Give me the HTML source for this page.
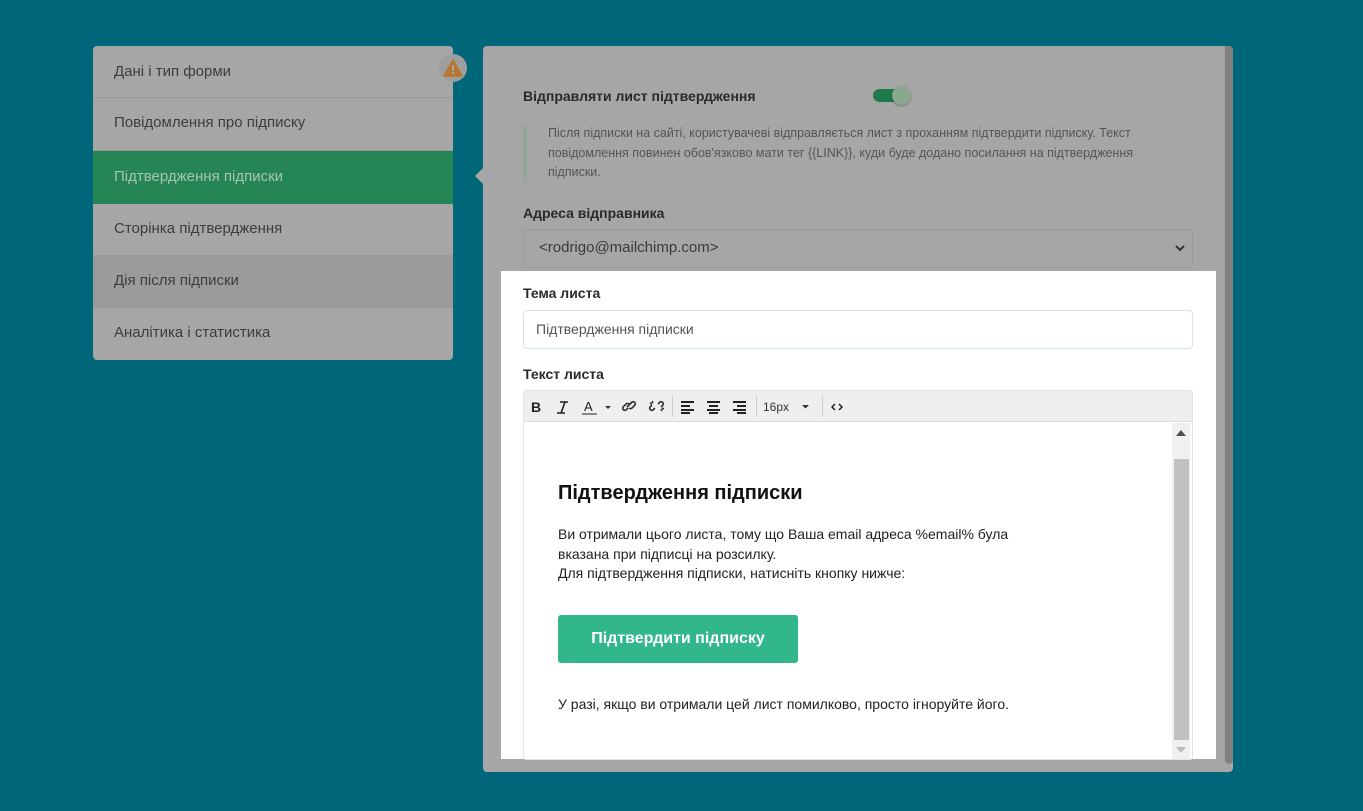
<!DOCTYPE html>
<html><head><meta charset="utf-8"><style>
*{box-sizing:border-box;margin:0;padding:0}
body{width:1363px;height:811px;background:#00677a;font-family:"Liberation Sans",sans-serif;position:relative;overflow:hidden}
.abs{position:absolute}
.menu{left:93px;top:46px;width:360px;height:314px;background:#a6a6a6;border-radius:4px;overflow:hidden}
.mi{height:52.3px;line-height:50px;padding-left:21px;font-size:15px;color:#3d3d3d;border-bottom:1px solid #9a9a9a}
.panel{left:483px;top:46px;width:750px;height:726px;background:#a6a6a6;border-radius:4px}
.t{font-size:14px;color:#2a2a2a;font-weight:bold}
</style></head><body>
<div class="abs menu">
<div class="mi" style="line-height:51px">Дані і тип форми</div>
<div class="mi">Повідомлення про підписку</div>
<div class="mi" style="background:#258555;color:#a8c5b2;border:none;height:53px;line-height:52px">Підтвердження підписки</div>
<div class="mi">Сторінка підтвердження</div>
<div class="mi" style="background:#9b9b9b">Дія після підписки</div>
<div class="mi" style="border:none">Аналітика і статистика</div>
</div>
<div class="abs" style="left:439px;top:54px;width:28px;height:28px;border-radius:50%;background:#9e9e9e"></div>
<svg class="abs" style="left:443px;top:58px" width="20" height="20" viewBox="0 0 20 20"><path d="M10 2L19 18H1Z" fill="#b7772e" stroke="#b7772e" stroke-linejoin="round" stroke-width="1.5"/><rect x="9" y="7" width="2" height="6" fill="#a6a6a6"/><rect x="9" y="14" width="2" height="2" fill="#a6a6a6"/></svg>
<div class="abs" style="left:475px;top:167px;width:0;height:0;border-top:9px solid transparent;border-bottom:9px solid transparent;border-right:9px solid #a6a6a6"></div>
<div class="abs panel"></div>
<div class="abs" style="left:1225px;top:46px;width:8px;height:718px;background:#808080;border-radius:0 4px 4px 4px"></div>
<div class="abs t" style="left:523px;top:88px">Відправляти лист підтвердження</div>
<div class="abs" style="left:873px;top:89px;width:30px;height:13px;border-radius:7px;background:#1e7a4d"></div>
<div class="abs" style="left:892px;top:86px;width:19px;height:19px;border-radius:50%;background:#8aa88f;box-shadow:0 1px 2px rgba(0,0,0,.3)"></div>
<div class="abs" style="left:523px;top:126px;width:4px;height:57px;background:#8fa89a"></div>
<div class="abs" style="left:548px;top:124px;width:612px;font-size:12.5px;line-height:19.5px;color:#555">Після підписки на сайті, користувачеві відправляється лист з проханням підтвердити підписку. Текст повідомлення повинен обов'язково мати тег {{LINK}}, куди буде додано посилання на підтвердження підписки.</div>
<div class="abs t" style="left:523px;top:205px">Адреса відправника</div>
<div class="abs" style="left:523px;top:229px;width:670px;height:39px;border:1px solid #8f9f9c;border-radius:4px;font-size:15px;color:#3a3a3a;padding:9px 15px">&lt;rodrigo@mailchimp.com&gt;</div>
<svg class="abs" style="left:1174px;top:243px" width="12" height="10"><path d="M2 3L6 7L10 3" stroke="#333" stroke-width="2" fill="none"/></svg>
<div class="abs" style="left:501px;top:271px;width:715px;height:488px;background:#fff"></div>
<div class="abs t" style="left:523px;top:285px">Тема листа</div>
<div class="abs" style="left:523px;top:310px;width:670px;height:39px;border:1px solid #d5e4e2;border-radius:4px;font-size:14px;color:#555;padding:10px 12px">Підтвердження підписки</div>
<div class="abs t" style="left:523px;top:366px">Текст листа</div>
<div class="abs" style="left:523px;top:390px;width:670px;height:370px;border:1px solid #dce6e5;border-radius:3px"></div>
<div class="abs" style="left:524px;top:391px;width:668px;height:31px;background:#efefef;border-bottom:1px solid #dcdcdc"></div>
<svg class="abs" style="left:524px;top:391px" width="330" height="31" viewBox="0 0 330 31">
<text x="7" y="21" font-family="Liberation Sans" font-weight="bold" font-size="14" fill="#222">B</text>
<path d="M36 11h8M33 22h8M41 11l-4 11" stroke="#222" stroke-width="1.6" fill="none"/>
<text x="60" y="20" font-family="Liberation Sans" font-size="13" fill="#222">A</text>
<rect x="58" y="22" width="15" height="2" fill="#888"/>
<path d="M81 15h6l-3 3z" fill="#333"/>
<g stroke="#333" stroke-width="1.6" fill="none"><path d="M104 17l-2 2a2.2 2.2 0 0 1-3-3l3-3a2.2 2.2 0 0 1 3 0"/><path d="M106 13l2-2a2.2 2.2 0 0 1 3 3l-3 3a2.2 2.2 0 0 1-3 0"/><path d="M103 16l4-4"/>
<path d="M131 17l-2 2a2.2 2.2 0 0 1-3-3l2-2M134 13l2-2a2.2 2.2 0 0 1 3 3l-2 2"/><path d="M128 10l1 2M126 12l2 1M138 20l-1-2M140 18l-2-1"/></g>
<rect x="148" y="5" width="1" height="21" fill="#ccc"/>
<g fill="#222"><rect x="157" y="10" width="13" height="2"/><rect x="157" y="14" width="9" height="2"/><rect x="157" y="18" width="13" height="2"/><rect x="157" y="22" width="9" height="2" transform="translate(0,-1)"/>
<rect x="183" y="10" width="13" height="2"/><rect x="185" y="14" width="9" height="2"/><rect x="183" y="18" width="13" height="2"/><rect x="185" y="21" width="9" height="2"/>
<rect x="209" y="10" width="13" height="2"/><rect x="213" y="14" width="9" height="2"/><rect x="209" y="18" width="13" height="2"/><rect x="213" y="21" width="9" height="2"/></g>
<rect x="232" y="5" width="1" height="21" fill="#ccc"/>
<text x="239" y="20" font-family="Liberation Sans" font-size="12" fill="#333">16px</text>
<path d="M278 14h7l-3.5 3.5z" fill="#333"/>
<rect x="298" y="5" width="1" height="21" fill="#ccc"/>
<path d="M311 13l-3 3 3 3M315 13l3 3-3 3" stroke="#222" stroke-width="1.5" fill="none"/>
</svg>
<div class="abs" style="left:1172px;top:423px;width:18px;height:336px;background:#f0f0f0"></div>
<div class="abs" style="left:1174px;top:459px;width:15px;height:281px;background:#c1c1c1"></div>
<div class="abs" style="left:1176px;top:430px;border-left:5px solid transparent;border-right:5px solid transparent;border-bottom:6px solid #505050"></div>
<div class="abs" style="left:1176px;top:747px;border-left:5px solid transparent;border-right:5px solid transparent;border-top:6px solid #bbb"></div>
<div class="abs" style="left:558px;top:482px;font-size:20px;font-weight:bold;color:#111">Підтвердження підписки</div>
<div class="abs" style="left:558px;top:525px;font-size:14px;line-height:19.5px;color:#222">Ви отримали цього листа, тому що Ваша email адреса %email% була<br>вказана при підписці на розсилку.<br>Для підтвердження підписки, натисніть кнопку нижче:</div>
<div class="abs" style="left:558px;top:615px;width:240px;height:48px;background:#32b68c;border-radius:3px;color:#fff;font-weight:bold;font-size:16px;text-align:center;line-height:48px">Підтвердити підписку</div>
<div class="abs" style="left:558px;top:696px;font-size:14px;color:#222">У разі, якщо ви отримали цей лист помилково, просто ігноруйте його.</div>
</body></html>
